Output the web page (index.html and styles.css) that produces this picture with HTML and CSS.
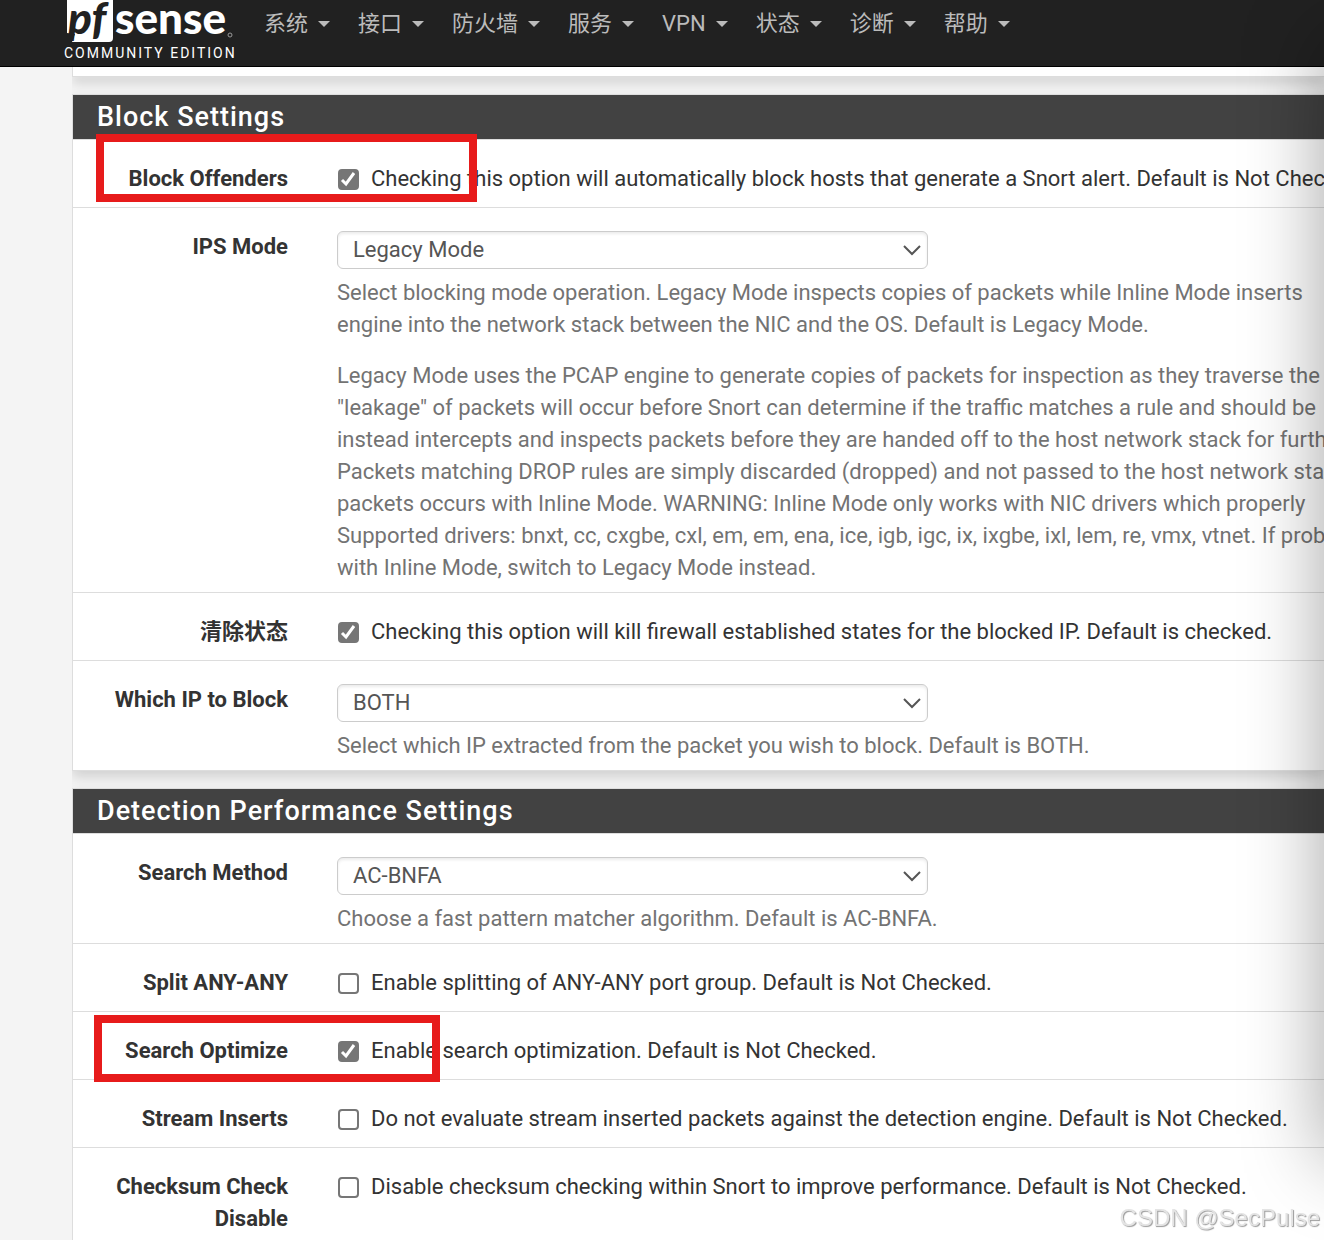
FILE: index.html
```html
<!DOCTYPE html>
<html lang="zh-CN">
<head>
  <meta charset="utf-8">
  <title>pfSense - Snort Interface Settings</title>
  <meta name="viewport" content="width=device-width, initial-scale=1.0">
  <link rel="stylesheet" href="styles.css">
</head>
<body>

  <header class="navbar">
    <a class="brand" href="#">
      <svg class="logo" width="170" height="44" viewBox="0 0 170 44" role="img" aria-label="pfsense">
        <path d="M3 0H49V38Q49 42 45 42H8L11 34L3 33Z" fill="#fff"/>
        <text class="logo-pf" x="4" y="34">pf</text>
        <text class="logo-sense" x="51" y="34">sense</text>
        <circle cx="166" cy="35" r="2" fill="none" stroke="#999"/>
      </svg>
      <span class="edition">COMMUNITY EDITION</span>
    </a>
    <nav class="menu">
      <a href="#">系统<i class="caret"></i></a>
      <a href="#">接口<i class="caret"></i></a>
      <a href="#">防火墙<i class="caret"></i></a>
      <a href="#">服务<i class="caret"></i></a>
      <a href="#">VPN<i class="caret"></i></a>
      <a href="#">状态<i class="caret"></i></a>
      <a href="#">诊断<i class="caret"></i></a>
      <a href="#">帮助<i class="caret"></i></a>
    </nav>
  </header>

  <main class="container">
    <section class="panel panel-end"></section>

    <section class="panel">
      <h2>Block Settings</h2>

      <div class="row">
        <label class="name" for="blockoffenders">Block Offenders</label>
        <div class="check">
          <input type="checkbox" id="blockoffenders" checked>
          <label for="blockoffenders">Checking this option will automatically block hosts that generate a Snort alert. Default is Not Checked.</label>
        </div>
        <div class="mark mark-block"></div>
      </div>

      <div class="row">
        <label class="name" for="ipsmode">IPS Mode</label>
        <div class="field">
          <select id="ipsmode"><option>Legacy Mode</option><option>Inline Mode</option></select>
          <p>Select blocking mode operation. Legacy Mode inspects copies of packets while Inline Mode inserts<br>
          engine into the network stack between the NIC and the OS. Default is Legacy Mode.</p>
          <p>Legacy Mode uses the PCAP engine to generate copies of packets for inspection as they traverse the<br>
          "leakage" of packets will occur before Snort can determine if the traffic matches a rule and should be<br>
          instead intercepts and inspects packets before they are handed off to the host network stack for further<br>
          Packets matching DROP rules are simply discarded (dropped) and not passed to the host network stack.<br>
          packets occurs with Inline Mode. WARNING: Inline Mode only works with NIC drivers which properly<br>
          Supported drivers: bnxt, cc, cxgbe, cxl, em, em, ena, ice, igb, igc, ix, ixgbe, ixl, lem, re, vmx, vtnet. If problems<br>
          with Inline Mode, switch to Legacy Mode instead.</p>
        </div>
      </div>

      <div class="row">
        <label class="name" for="killstates">清除状态</label>
        <div class="check">
          <input type="checkbox" id="killstates" checked>
          <label for="killstates">Checking this option will kill firewall established states for the blocked IP. Default is checked.</label>
        </div>
      </div>

      <div class="row">
        <label class="name" for="blockip">Which IP to Block</label>
        <div class="field">
          <select id="blockip"><option>SRC</option><option>DST</option><option selected>BOTH</option></select>
          <p>Select which IP extracted from the packet you wish to block. Default is BOTH.</p>
        </div>
      </div>
    </section>

    <section class="panel">
      <h2>Detection Performance Settings</h2>

      <div class="row">
        <label class="name" for="searchmethod">Search Method</label>
        <div class="field">
          <select id="searchmethod"><option>AC-BNFA</option></select>
          <p>Choose a fast pattern matcher algorithm. Default is AC-BNFA.</p>
        </div>
      </div>

      <div class="row">
        <label class="name" for="splitany">Split ANY-ANY</label>
        <div class="check">
          <input type="checkbox" id="splitany">
          <label for="splitany">Enable splitting of ANY-ANY port group. Default is Not Checked.</label>
        </div>
      </div>

      <div class="row">
        <label class="name" for="optimize">Search Optimize</label>
        <div class="check">
          <input type="checkbox" id="optimize" checked>
          <label for="optimize">Enable search optimization. Default is Not Checked.</label>
        </div>
        <div class="mark mark-search"></div>
      </div>

      <div class="row">
        <label class="name" for="noinserts">Stream Inserts</label>
        <div class="check">
          <input type="checkbox" id="noinserts">
          <label for="noinserts">Do not evaluate stream inserted packets against the detection engine. Default is Not Checked.</label>
        </div>
      </div>

      <div class="row">
        <label class="name" for="cksum">Checksum Check Disable</label>
        <div class="check">
          <input type="checkbox" id="cksum">
          <label for="cksum">Disable checksum checking within Snort to improve performance. Default is Not Checked.</label>
        </div>
      </div>
    </section>
  </main>

  <div class="edge-shadow"></div>
  <div class="watermark">CSDN @SecPulse</div>

</body>
</html>
```
FILE: styles.css
```css
* {
  box-sizing: border-box;
}

body {
  margin: 0;
  height: 100vh;
  overflow: hidden;
  background: #f4f4f4;
  color: #333;
  font-family: Roboto, "Noto Sans CJK SC", sans-serif;
  font-size: 22px;
  line-height: 32px;
}

/* top bar */
.navbar {
  display: flex;
  height: 67px;
  padding-left: 64px;
  background: #212121;
  border-bottom: 1px solid #000;
}

.brand {
  display: flex;
  flex-direction: column;
  width: 176px;
  color: #fff;
  text-decoration: none;
}

.logo {
  display: block;
  overflow: visible;
}

.logo text {
  font-family: Lato, sans-serif;
  font-size: 44px;
  font-weight: 900;
}

.logo-pf {
  font-style: italic;
  fill: #212121;
}

.logo-sense {
  fill: #fff;
}

.edition {
  font-size: 14px;
  line-height: 18px;
  letter-spacing: 2px;
  white-space: nowrap;
}

.menu {
  display: flex;
  gap: 28px;
  padding: 8px 0 0 24px;
}

.menu a {
  display: flex;
  align-items: center;
  gap: 10px;
  height: 32px;
  color: #bbb;
  text-decoration: none;
}

.caret {
  border: 6px solid transparent;
  border-top-color: #bbb;
  border-bottom: 0;
}

/* panels */
.container {
  margin-left: 72px;
  overflow: hidden;
}

.panel {
  margin-bottom: 17px;
  background: #fff;
  border: 1px solid #ddd;
  border-right: 0;
  box-shadow: 0 6px 12px rgba(0, 0, 0, 0.15);
}

.panel-end {
  height: 10px;
  border-top: 0;
}

.panel h2 {
  margin: 0;
  padding: 0 24px;
  background: #424242;
  color: #fff;
  font-size: 27px;
  font-weight: 500;
  line-height: 44px;
  letter-spacing: 1px;
  border-bottom: 1px solid #ddd;
}

.row {
  display: grid;
  grid-template-columns: 215px 1fr;
  column-gap: 49px;
  position: relative;
  border-bottom: 1px solid #ddd;
}

.row:last-child {
  border-bottom: 0;
}

.name {
  padding: 23px 0 12px 24px;
  font-weight: 700;
  text-align: right;
}

.check,
.field {
  min-width: 0;
  overflow: hidden;
  white-space: nowrap;
}

.check {
  display: flex;
  align-items: flex-start;
  gap: 12px;
  padding: 23px 0 12px;
}

.check input {
  flex: none;
  appearance: none;
  width: 21px;
  height: 21px;
  margin: 6px 0 0 1px;
  border: 2px solid #767676;
  border-radius: 4px;
  background: #fff;
}

.check input:checked {
  background: #767676 url("data:image/svg+xml,%3Csvg xmlns='http://www.w3.org/2000/svg' viewBox='0 0 17 17'%3E%3Cpath d='M2 9l4 4 8-11' fill='none' stroke='white' stroke-width='3'/%3E%3C/svg%3E");
}

.field {
  padding: 23px 0 8px;
}

.field select {
  display: block;
  appearance: none;
  width: 591px;
  max-width: 100%;
  height: 38px;
  padding: 0 15px;
  border: 1px solid #ccc;
  border-radius: 6px;
  background: #fff url("data:image/svg+xml,%3Csvg xmlns='http://www.w3.org/2000/svg' width='18' height='11'%3E%3Cpath d='M1 1l8 8 8-8' fill='none' stroke='%23555' stroke-width='2'/%3E%3C/svg%3E") no-repeat right 6px center;
  box-shadow: inset 0 2px 3px rgba(0, 0, 0, 0.08);
  color: #555;
  font: inherit;
}

.field p {
  margin: 8px 0 0;
  color: #737373;
}

.field p + p {
  margin-top: 19px;
}

/* red frames over the settings to change */
.mark {
  position: absolute;
  border: 8px solid #e71b1b;
  pointer-events: none;
}

.mark-block {
  left: 23px;
  top: -6px;
  width: 381px;
  height: 68px;
}

.mark-search {
  left: 21px;
  top: 3px;
  width: 346px;
  height: 67px;
}

.edge-shadow {
  position: fixed;
  top: 36px;
  bottom: 80px;
  left: 100%;
  width: 100px;
  box-shadow: 0 0 80px rgba(0, 0, 0, 0.36);
  pointer-events: none;
}

.watermark {
  position: fixed;
  right: 4px;
  bottom: 6px;
  color: #e4e4e4;
  font-family: "Liberation Sans", Arial, sans-serif;
  font-size: 24px;
  text-shadow: 1px 1px 1px #999;
}
```
